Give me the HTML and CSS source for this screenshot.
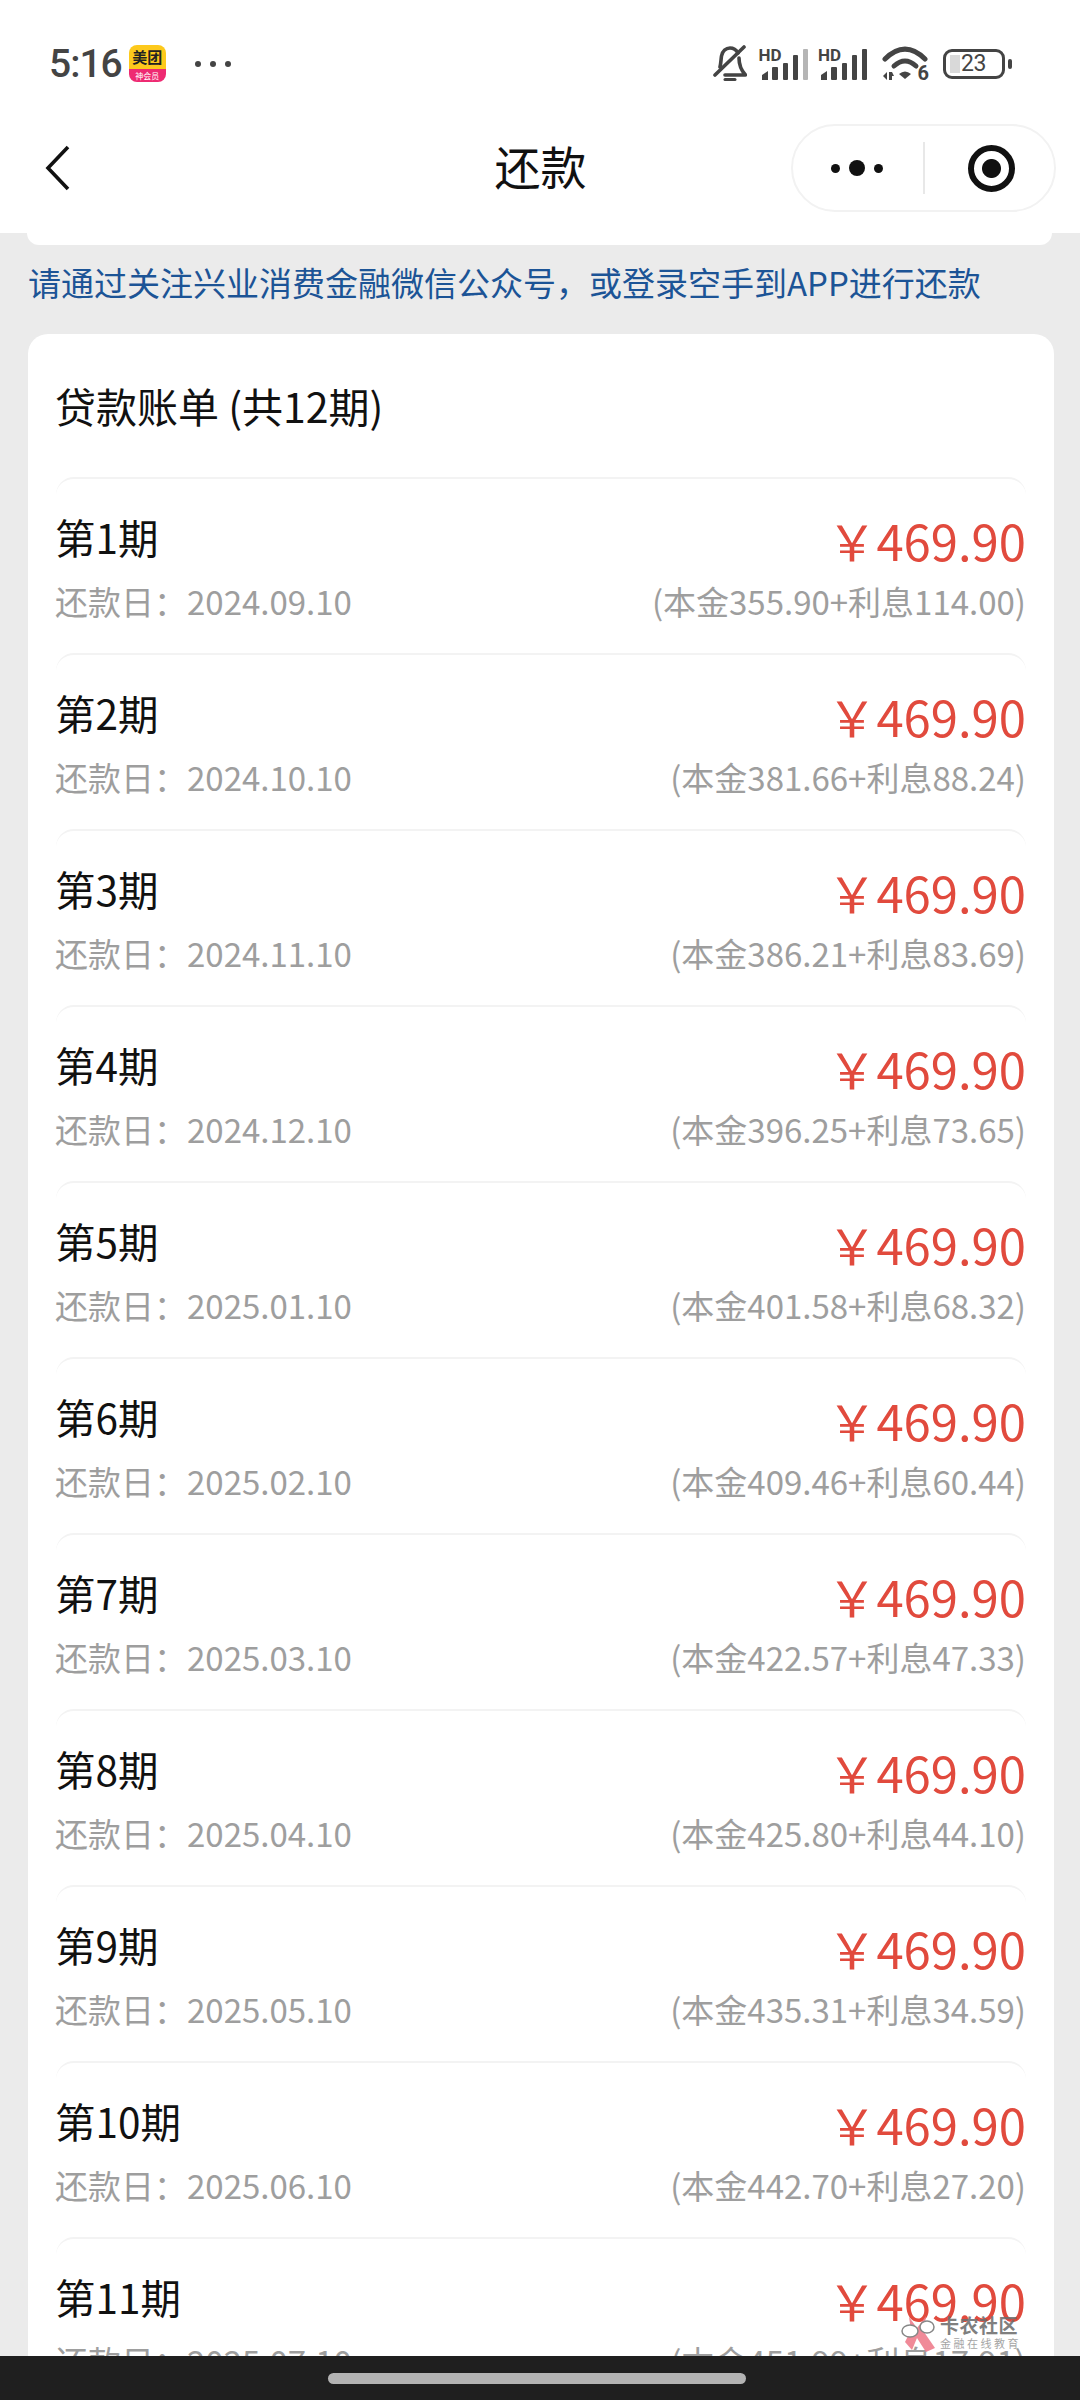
FILE: index.html
```html
<!DOCTYPE html>
<html lang="zh-CN">
<head>
    <meta charset="UTF-8">
    <meta name="viewport" content="width=device-width, initial-scale=1.0">
    <title>还款</title>
    <link rel="stylesheet" href="styles.css">
</head>
<body>
    <div class="page">
        <header class="top">
            <div class="statusbar">
                <div class="status-left">
                    <span class="time">5:16</span>
                    <span class="app-icon">
                        <span class="app-icon-top">美团</span>
                        <span class="app-icon-bottom">神会员</span>
                    </span>
                    <span class="more-dots"><i></i><i></i><i></i></span>
                </div>
                <div class="status-right">
                    <svg class="icon-bell" width="34" height="38" viewBox="0 0 34 38">
                        <path d="M7 22c1-4 1-8 1.500-11C9.500 6 13 3 17 3c3.500 0 6 1.500 8 5M26 13c0 5 1 11 6.500 17H12" fill="none" stroke="#444" stroke-width="3.600" stroke-linecap="round" stroke-linejoin="round"/>
                        <path d="M31 2L2 30" stroke="#444" stroke-width="3.600" stroke-linecap="round"/>
                        <path d="M12 34.500h10" stroke="#444" stroke-width="3" stroke-linecap="round"/>
                    </svg>
                    <span class="signal">
                        <span class="hd">HD</span>
                        <svg width="50" height="36" viewBox="0 0 50 36">
                            <path d="M3 34v-5l6-4v9z" fill="#444"/>
                            <rect x="13" y="21" width="6" height="13" rx="1" fill="#444"/>
                            <rect x="24" y="17" width="5" height="17" rx="1" fill="#444"/>
                            <rect x="34" y="9" width="5" height="25" rx="1" fill="#444"/>
                            <rect x="44" y="3" width="5" height="31" rx="1" fill="#b5b5b5"/>
                        </svg>
                    </span>
                    <span class="signal">
                        <span class="hd">HD</span>
                        <svg width="50" height="36" viewBox="0 0 50 36">
                            <path d="M3 34v-5l6-4v9z" fill="#444"/>
                            <rect x="13" y="21" width="6" height="13" rx="1" fill="#444"/>
                            <rect x="24" y="17" width="5" height="17" rx="1" fill="#444"/>
                            <rect x="34" y="9" width="5" height="25" rx="1" fill="#444"/>
                            <rect x="44" y="3" width="5" height="31" rx="1" fill="#444"/>
                        </svg>
                    </span>
                    <span class="wifi">
                        <svg width="46" height="35" viewBox="0 0 46 35">
                            <path d="M3 13Q23-7 43 13" fill="none" stroke="#444" stroke-width="5" stroke-linecap="round"/>
                            <path d="M12 20Q23 10 34 20" fill="none" stroke="#444" stroke-width="5" stroke-linecap="round"/>
                            <path d="M23 33l-6-5q6-5 12 0z" fill="#444"/>
                            <path d="M1 30l4-4v8zM7 26h3l2 4h-2v4H7z" fill="#444"/>
                        </svg>
                        <span class="wifi-num">6</span>
                    </span>
                    <span class="battery">
                        <span class="battery-body">
                            <span class="battery-level"></span>
                            <span class="battery-num">23</span>
                        </span>
                        <span class="battery-nub"></span>
                    </span>
                </div>
            </div>
            <nav class="navbar">
                <svg class="back" width="26" height="46" viewBox="0 0 26 46">
                    <path d="M23 2L3 23l20 21" fill="none" stroke="#111" stroke-width="3.600"/>
                </svg>
                <h1 class="nav-title">还款</h1>
                <div class="capsule">
                    <span class="capsule-dots"><i></i><i class="big"></i><i></i></span>
                    <span class="capsule-line"></span>
                    <span class="capsule-ring"></span>
                </div>
            </nav>
        </header>

        <main class="content">
            <div class="prev-card"></div>
            <p class="notice">请通过关注兴业消费金融微信公众号，或登录空手到APP进行还款</p>

            <section class="card">
                <h2 class="card-title">贷款账单 (共12期)</h2>

                <div class="row">
                    <div class="row-left"><div class="period">第1期</div><div class="sub">还款日：2024.09.10</div></div>
                    <div class="row-right"><div class="amount">￥469.90</div><div class="sub">(本金355.90+利息114.00)</div></div>
                </div>
                <div class="row">
                    <div class="row-left"><div class="period">第2期</div><div class="sub">还款日：2024.10.10</div></div>
                    <div class="row-right"><div class="amount">￥469.90</div><div class="sub">(本金381.66+利息88.24)</div></div>
                </div>
                <div class="row">
                    <div class="row-left"><div class="period">第3期</div><div class="sub">还款日：2024.11.10</div></div>
                    <div class="row-right"><div class="amount">￥469.90</div><div class="sub">(本金386.21+利息83.69)</div></div>
                </div>
                <div class="row">
                    <div class="row-left"><div class="period">第4期</div><div class="sub">还款日：2024.12.10</div></div>
                    <div class="row-right"><div class="amount">￥469.90</div><div class="sub">(本金396.25+利息73.65)</div></div>
                </div>
                <div class="row">
                    <div class="row-left"><div class="period">第5期</div><div class="sub">还款日：2025.01.10</div></div>
                    <div class="row-right"><div class="amount">￥469.90</div><div class="sub">(本金401.58+利息68.32)</div></div>
                </div>
                <div class="row">
                    <div class="row-left"><div class="period">第6期</div><div class="sub">还款日：2025.02.10</div></div>
                    <div class="row-right"><div class="amount">￥469.90</div><div class="sub">(本金409.46+利息60.44)</div></div>
                </div>
                <div class="row">
                    <div class="row-left"><div class="period">第7期</div><div class="sub">还款日：2025.03.10</div></div>
                    <div class="row-right"><div class="amount">￥469.90</div><div class="sub">(本金422.57+利息47.33)</div></div>
                </div>
                <div class="row">
                    <div class="row-left"><div class="period">第8期</div><div class="sub">还款日：2025.04.10</div></div>
                    <div class="row-right"><div class="amount">￥469.90</div><div class="sub">(本金425.80+利息44.10)</div></div>
                </div>
                <div class="row">
                    <div class="row-left"><div class="period">第9期</div><div class="sub">还款日：2025.05.10</div></div>
                    <div class="row-right"><div class="amount">￥469.90</div><div class="sub">(本金435.31+利息34.59)</div></div>
                </div>
                <div class="row">
                    <div class="row-left"><div class="period">第10期</div><div class="sub">还款日：2025.06.10</div></div>
                    <div class="row-right"><div class="amount">￥469.90</div><div class="sub">(本金442.70+利息27.20)</div></div>
                </div>
                <div class="row">
                    <div class="row-left"><div class="period">第11期</div><div class="sub">还款日：2025.07.10</div></div>
                    <div class="row-right"><div class="amount">￥469.90</div><div class="sub">(本金451.99+利息17.91)</div></div>
                </div>
            </section>
        </main>

        <footer class="gesture-bar"><span class="gesture-pill"></span></footer>

        <div class="watermark">
            <svg class="watermark-logo" width="36" height="38" viewBox="0 0 36 38">
                <path d="M9 3l8 11 9-12-2 16 11 16-9 4-9-14-5 12-7-8 6-12z" fill="#ee7a8a"/>
                <ellipse cx="10" cy="17" rx="8" ry="6" fill="#fff" stroke="#777" stroke-width="1.500"/>
                <ellipse cx="27" cy="13" rx="7" ry="6" fill="#fff" stroke="#777" stroke-width="1.500"/>
            </svg>
            <div class="watermark-text">
                <div class="watermark-name">卡农社区</div>
                <div class="watermark-slogan">金融在线教育</div>
            </div>
        </div>
    </div>
</body>
</html>
```

FILE: styles.css
```css
* {
    box-sizing: border-box;
}
html, body {
    margin: 0;
    padding: 0;
}
body {
    font-family: "Noto Sans CJK SC", "Noto Sans", sans-serif;
    background: #ebebeb;
}
.page {
    position: relative;
    width: 1080px;
    height: 2400px;
    display: flex;
    flex-direction: column;
    overflow: hidden;
}

/* status bar + nav */
.top {
    background: #fff;
    height: 233px;
    flex-shrink: 0;
}
.statusbar {
    height: 124px;
    display: flex;
    justify-content: space-between;
    align-items: center;
    padding: 3px 68px 0 49px;
}
.status-left, .status-right {
    display: flex;
    align-items: center;
}
.time {
    font-family: Roboto, sans-serif;
    font-size: 39px;
    font-weight: 500;
    color: #444;
    letter-spacing: -1px;
}
.app-icon {
    width: 37px;
    height: 37px;
    margin-left: 7px;
    border-radius: 8px;
    overflow: hidden;
    display: flex;
    flex-direction: column;
}
.app-icon-top {
    height: 24px;
    background: #fdc91c;
    color: #222;
    font-size: 15px;
    font-weight: 700;
    line-height: 24px;
    text-align: center;
}
.app-icon-bottom {
    height: 13px;
    background: #ee2a72;
    color: #fff;
    font-size: 8px;
    line-height: 13px;
    text-align: center;
}
.more-dots {
    display: flex;
    gap: 9px;
    margin-left: 29px;
}
.more-dots i {
    width: 6px;
    height: 6px;
    border-radius: 50%;
    background: #444;
}
.icon-bell {
    margin-right: 12px;
}
.signal {
    position: relative;
    width: 50px;
    height: 36px;
    margin-right: 9.500px;
}
.signal svg {
    display: block;
}
.hd {
    position: absolute;
    left: 0;
    top: 1px;
    font-family: Roboto, sans-serif;
    font-size: 17px;
    font-weight: 700;
    line-height: 16px;
    color: #444;
}
.wifi {
    position: relative;
    width: 46px;
    height: 35px;
    margin: 0 15px 0 4.500px;
}
.wifi svg {
    display: block;
}
.wifi-num {
    position: absolute;
    right: -1px;
    bottom: -1px;
    font-family: Roboto, sans-serif;
    font-size: 20px;
    font-weight: 700;
    line-height: 17px;
    color: #444;
}
.battery {
    display: flex;
    align-items: center;
    gap: 3px;
}
.battery-body {
    position: relative;
    width: 62px;
    height: 30px;
    border: 3px solid #444;
    border-radius: 9px;
    display: flex;
    align-items: center;
    padding-left: 15px;
}
.battery-level {
    position: absolute;
    left: 4px;
    top: 3px;
    bottom: 3px;
    width: 10px;
    background: #d9d9d9;
}
.battery-num {
    position: relative;
    font-family: Roboto, sans-serif;
    font-size: 23px;
    color: #444;
    letter-spacing: -0.500px;
}
.battery-nub {
    width: 4px;
    height: 10px;
    border-radius: 2px;
    background: #444;
}
.navbar {
    height: 88px;
    display: grid;
    grid-template-columns: 1fr auto 1fr;
    align-items: center;
    padding: 0 24px 0 47px;
}
.back {
    display: block;
    margin-left: -2px;
}
.nav-title {
    margin: 0 22px 0 0;
    padding-bottom: 6px;
    font-size: 46px;
    font-weight: 400;
    color: #111;
}
.capsule {
    justify-self: end;
    width: 265px;
    height: 88px;
    border: 2px solid #f2f2f2;
    border-radius: 44px;
    display: flex;
    align-items: center;
    position: relative;
}
.capsule-dots {
    display: flex;
    align-items: center;
    gap: 9px;
    margin-left: 38px;
}
.capsule-dots i {
    width: 9px;
    height: 9px;
    border-radius: 50%;
    background: #111;
}
.capsule-dots i.big {
    width: 16px;
    height: 16px;
}
.capsule-line {
    width: 2px;
    height: 52px;
    margin-left: 40px;
    background: #e8e8e8;
}
.capsule-ring {
    width: 47px;
    height: 47px;
    margin-left: 43px;
    border: 6px solid #111;
    border-radius: 50%;
    background: radial-gradient(circle, #111 0 9px, #fff 10px);
}

/* content */
.content {
    flex: 1;
    min-height: 0;
    overflow: hidden;
}
.prev-card {
    height: 12px;
    margin: 0 28px 0 27px;
    background: #fff;
    border-radius: 0 0 20px 20px;
}
.notice {
    margin: 17px 0 0 28px;
    font-size: 33px;
    line-height: 40px;
    color: #1c5496;
    white-space: nowrap;
}
.card {
    margin: 32px 26px 0 28px;
    padding: 0 28px;
    background: #fff;
    border-radius: 20px;
}
.card-title {
    height: 143px;
    margin: 0 0 0 -1px;
    font-size: 41px;
    font-weight: 400;
    line-height: 143px;
    color: #111;
}
.row {
    height: 176px;
    padding-top: 32px;
    display: flex;
    justify-content: space-between;
    border-top: 2px solid #f3f3f3;
    border-radius: 18px 18px 0 0;
}
.row-left {
    margin-left: -1px;
}
.row-right {
    text-align: right;
    margin-top: -1px;
}
.period {
    font-size: 40.500px;
    line-height: 52px;
    color: #111;
}
.sub {
    font-size: 33px;
    line-height: 48px;
    color: #9e9e9e;
}
.row-left .sub {
    margin-top: 14px;
}
.amount {
    font-size: 49px;
    line-height: 60px;
    color: #e14a3d;
}
.row-right .sub {
    margin-top: 7px;
}

/* bottom */
.gesture-bar {
    height: 44px;
    flex-shrink: 0;
    background: #1f1f1f;
    display: flex;
    justify-content: center;
    padding: 17px 6px 0 0;
}
.gesture-pill {
    width: 418px;
    height: 11px;
    border-radius: 6px;
    background: #b3b3b3;
}

/* forum watermark */
.watermark {
    position: absolute;
    left: 900px;
    top: 2314px;
    display: flex;
    gap: 4px;
    opacity: 0.88;
}
.watermark-name {
    font-size: 19px;
    font-weight: 700;
    line-height: 22px;
    letter-spacing: 0.500px;
    color: #6e6e6e;
}
.watermark-slogan {
    margin-top: 1px;
    font-size: 11px;
    line-height: 13px;
    letter-spacing: 2.500px;
    color: #999;
}
```
